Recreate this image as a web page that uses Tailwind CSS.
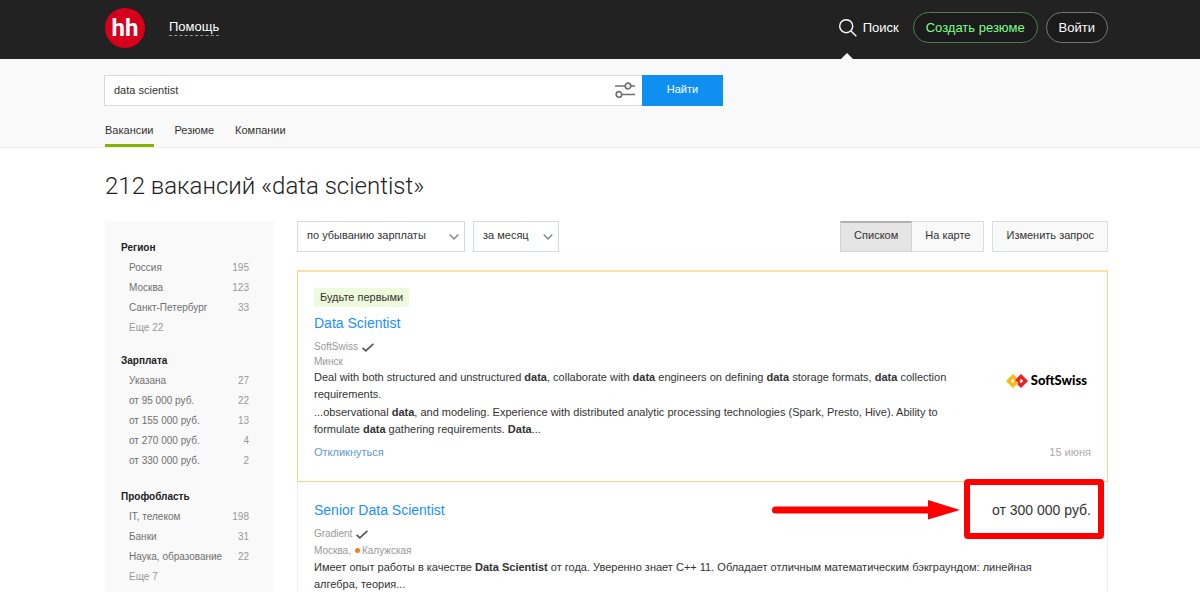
<!DOCTYPE html>
<html lang="ru">
<head>
  <meta charset="UTF-8" />
  <meta name="viewport" content="width=device-width, initial-scale=1.0"/>
  <title>Вакансии data scientist</title>
  <script src="https://cdn.jsdelivr.net/npm/@tailwindcss/browser@4"></script>
</head>
<body class="bg-white text-[#333] text-[11px] leading-[17px] font-['Liberation_Sans',Arial,sans-serif]">

  <!-- Header -->
  <header class="bg-[#222] h-[59px] pl-[105px] pr-[92px] flex items-center text-white text-[13px]">
    <a href="#" class="w-10 h-10 -mt-1 rounded-full bg-[#d6001c] flex items-center justify-center font-['Roboto',sans-serif] font-bold text-[24px] leading-6">hh</a>
    <a href="#" class="ml-6 -mt-1 border-b border-dashed border-[#999] leading-4">Помощь</a>
    <nav class="ml-auto -mt-1 flex items-center">
      <a href="#" class="relative flex items-center gap-1.5 mr-3.5">
        <svg class="w-[18px] h-[18px]" viewBox="0 0 18 18" fill="none" stroke="#fff" stroke-width="1.4">
          <circle cx="7.2" cy="7.2" r="6.5"/>
          <path d="M12 12l5.3 5.3"/>
        </svg>
        Поиск
        <svg class="absolute left-0.5 top-[34px] w-3 h-1.5" viewBox="0 0 12 6"><path d="M0 6l6-6 6 6z" fill="#f9f9f9"/></svg>
      </a>
      <button class="h-[31px] px-3 mr-2 rounded-full border border-[#4b7d50] bg-[#1b1b1b] text-[#7dff8a]">Создать резюме</button>
      <button class="h-[31px] px-3 rounded-full border border-[#777] bg-[#1b1b1b]">Войти</button>
    </nav>
  </header>

  <!-- Search -->
  <div class="bg-[#f9f9f9] border-b border-[#eee] pl-[104px] pr-[92px] pt-4">
    <form class="flex h-[31px] w-full max-w-[619px]">
      <div class="relative flex-1">
        <input type="text" value="data scientist" aria-label="Поиск вакансий" class="w-full h-full bg-white border border-r-0 border-[#d9dcde] pl-[9px] pr-9 pb-0.5 outline-none">
        <button type="button" aria-label="Расширенный поиск" class="absolute right-[7px] top-[7px]">
          <svg class="w-5 h-4" viewBox="0 0 20 16" fill="none" stroke="#707070" stroke-width="1.7">
            <path d="M0 4h10M16 4h4M7 12.5h13"/>
            <circle cx="13" cy="4" r="2.8"/>
            <circle cx="4" cy="12.5" r="2.8"/>
          </svg>
        </button>
      </div>
      <button type="button" class="w-[81px] bg-[#0f8ff0] text-white pb-0.5">Найти</button>
    </form>
    <nav class="flex gap-[21px] pt-4 pl-px">
      <a href="#" class="h-[25px] border-b-3 border-[#86b300]">Вакансии</a>
      <a href="#">Резюме</a>
      <a href="#">Компании</a>
    </nav>
  </div>

  <main class="pl-[105px] pr-[92px]">
    <h1 class="pt-5 pb-[17px] text-[24px] leading-9 font-light text-[#222] font-['Roboto',sans-serif]">212 вакансий «data scientist»</h1>

    <div class="flex gap-6">
      <!-- Filters -->
      <aside class="w-[168px] shrink-0 bg-[#f9f9f9] pt-4 pb-1 px-4 flex flex-col gap-[15px] text-[10px] leading-5 text-[#707070]">
        <section>
          <h2 class="font-bold leading-[21px] text-[#222]">Регион</h2>
          <ul class="px-2">
            <li class="flex justify-between"><a href="#">Россия</a><span class="text-[#999]">195</span></li>
            <li class="flex justify-between"><a href="#">Москва</a><span class="text-[#999]">123</span></li>
            <li class="flex justify-between"><a href="#">Санкт-Петербург</a><span class="text-[#999]">33</span></li>
            <li class="mt-[3px] leading-[14px] text-[#999]"><a href="#">Еще 22</a></li>
          </ul>
        </section>
        <section>
          <h2 class="font-bold leading-[21px] text-[#222]">Зарплата</h2>
          <ul class="px-2">
            <li class="flex justify-between"><a href="#">Указана</a><span class="text-[#999]">27</span></li>
            <li class="flex justify-between"><a href="#">от 95 000 руб.</a><span class="text-[#999]">22</span></li>
            <li class="flex justify-between"><a href="#">от 155 000 руб.</a><span class="text-[#999]">13</span></li>
            <li class="flex justify-between"><a href="#">от 270 000 руб.</a><span class="text-[#999]">4</span></li>
            <li class="flex justify-between"><a href="#">от 330 000 руб.</a><span class="text-[#999]">2</span></li>
          </ul>
        </section>
        <section>
          <h2 class="font-bold leading-[21px] text-[#222]">Профобласть</h2>
          <ul class="px-2">
            <li class="flex justify-between"><a href="#">IT, телеком</a><span class="text-[#999]">198</span></li>
            <li class="flex justify-between"><a href="#">Банки</a><span class="text-[#999]">31</span></li>
            <li class="flex justify-between"><a href="#">Наука, образование</a><span class="text-[#999]">22</span></li>
            <li class="mt-[3px] leading-[14px] text-[#999]"><a href="#">Еще 7</a></li>
          </ul>
        </section>
      </aside>

      <div class="flex-1 min-w-0">
        <!-- Sorting -->
        <div class="flex gap-2 mb-[18px]">
          <div class="relative">
            <select aria-label="Сортировка" class="appearance-none w-[168px] h-[31px] border border-[#d5dadd] bg-white pl-[9px] pb-0.5">
              <option>по убыванию зарплаты</option>
            </select>
            <svg class="absolute right-1.5 top-3 w-[10px] h-2 pointer-events-none" viewBox="0 0 10 8" fill="none" stroke="#848b90" stroke-width="1.5"><path d="M.7 1.5L5 6l4.3-4.5"/></svg>
          </div>
          <div class="relative">
            <select aria-label="Период" class="appearance-none w-[86px] h-[31px] border border-[#d5dadd] bg-white pl-[9px] pb-0.5">
              <option>за месяц</option>
            </select>
            <svg class="absolute right-1.5 top-3 w-[10px] h-2 pointer-events-none" viewBox="0 0 10 8" fill="none" stroke="#848b90" stroke-width="1.5"><path d="M.7 1.5L5 6l4.3-4.5"/></svg>
          </div>
          <div class="ml-auto flex">
            <button class="h-[31px] px-[13px] pb-[3px] border border-[#d0d4d6] border-t-2 border-t-[#b0b0b0] bg-[#e5e5e5]">Списком</button>
            <button class="h-[31px] px-[13px] pb-0.5 border border-l-0 border-[#d9dfe1] bg-[#f9f9f9]">На карте</button>
          </div>
          <button class="h-[31px] px-[13px] pb-0.5 border border-[#d9dfe1] bg-[#f9f9f9]">Изменить запрос</button>
        </div>

        <!-- Vacancies -->
        <article class="border border-t-2 border-[#f3d68a] border-t-[#f9e2a6] px-4 pt-4 pb-5 flex justify-between">
          <div class="w-[650px]">
            <span class="inline-block bg-[#eefadc] rounded-xs px-1.5 leading-[19px]">Будьте первыми</span>
            <h2 class="mt-1.5 text-[14px] leading-5 text-[#1990ff]"><a href="#">Data Scientist</a></h2>
            <div class="mt-1.5 flex items-center gap-1 text-[10px] leading-4 text-[#999]">
              <a href="#">SoftSwiss</a>
              <svg class="w-3 h-[9px]" viewBox="0 0 12 9" fill="none" stroke="#555" stroke-width="1.7"><path d="M.6 4.8l3.2 3L11.4.8"/></svg>
            </div>
            <div class="text-[10px] leading-[14px] text-[#999]">Минск</div>
            <p>Deal with both structured and unstructured <b>data</b>, collaborate with <b>data</b> engineers on defining <b>data</b> storage formats, <b>data</b> collection requirements.</p>
            <p class="mt-px">...observational <b>data</b>, and modeling. Experience with distributed analytic processing technologies (Spark, Presto, Hive). Ability to formulate <b>data</b> gathering requirements. <b>Data</b>...</p>
            <a href="#" class="block mt-1.5 text-[#5a9bd0]">Откликнуться</a>
          </div>
          <div class="flex flex-col items-end justify-end">
            <div class="mb-[55px] mr-1 flex items-center gap-[3px] text-[13px] text-black font-['Lato',sans-serif] font-black">
              <svg class="w-[22px] h-[14px]" viewBox="0 0 22 14" fill="none" stroke-width="3.4">
                <path d="M9.6 5L7 2.4 2.4 7 7 11.6 10.4 8.2 8.2 6.6" stroke="#fdb913"/>
                <path d="M12.4 9l2.6 2.6L19.6 7 15 2.4 11.6 5.8 13.8 7.4" stroke="#ee1c25"/>
              </svg>
              SoftSwiss
            </div>
            <div class="text-[#aaa]">15 июня</div>
          </div>
        </article>

        <article class="relative border border-t-0 border-[#eee] px-4 pt-[18px] pb-6">
          <div class="flex justify-between text-[14px] leading-5">
            <h2 class="text-[#1990ff]"><a href="#">Senior Data Scientist</a></h2>
            <div>от 300 000 руб.</div>
          </div>
          <div class="mt-1.5 flex items-center gap-1 text-[10px] leading-4 text-[#999]">
            <a href="#">Gradient</a>
            <svg class="w-3 h-[9px]" viewBox="0 0 12 9" fill="none" stroke="#555" stroke-width="1.7"><path d="M.6 4.8l3.2 3L11.4.8"/></svg>
          </div>
          <div class="flex items-center text-[10px] leading-[17px] text-[#999]">Москва,<span class="w-[5px] h-[5px] rounded-full bg-[#f47b20] ml-1 mr-0.5"></span>Калужская</div>
          <p class="w-[740px]">Имеет опыт работы в качестве <b>Data Scientist</b> от года. Уверенно знает C++ 11. Обладает отличным математическим бэкграундом: линейная алгебра, теория...</p>

          <!-- Callout around the salary -->
          <div class="absolute -top-[3px] right-[3px] w-[140px] h-[60px] border-6 border-[#ff0000] rounded-sm"></div>
          <svg class="absolute top-[18px] right-[147px] w-[190px] h-5" viewBox="0 0 190 20" fill="#ff0000">
            <rect x="2" y="6.5" width="164" height="7" rx="3.5"/>
            <path d="M158 0l32 10-32 9.5z"/>
          </svg>
        </article>
      </div>
    </div>
  </main>

</body>
</html>
